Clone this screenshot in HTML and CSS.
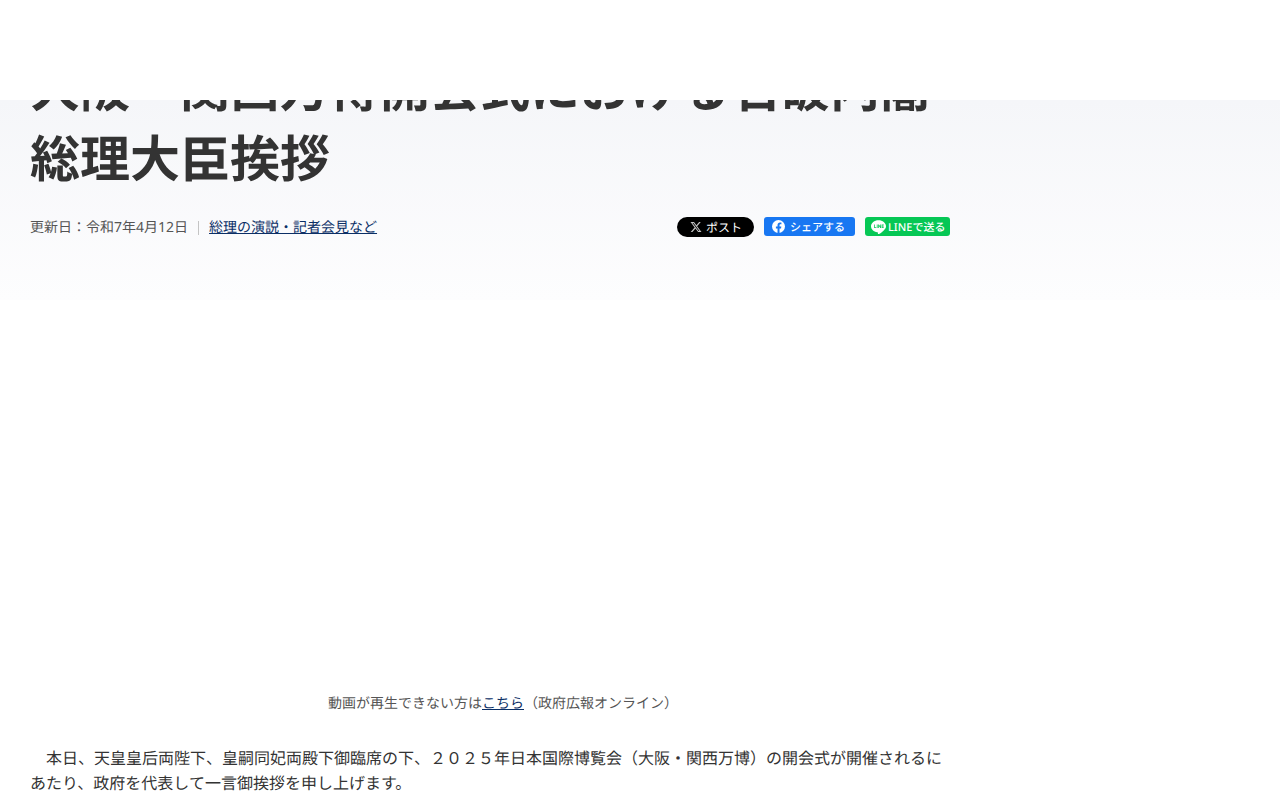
FILE: index.html
```html
<!DOCTYPE html>
<html lang="ja">
<head>
  <meta charset="UTF-8">
  <meta name="viewport" content="width=device-width, initial-scale=1.0">
  <title>大阪・関西万博開会式における石破内閣総理大臣挨拶</title>
  <link rel="stylesheet" href="styles.css">
</head>
<body>
  <header class="site-header"></header>
  <section class="hero">
    <h1>大阪・関西万博開会式における石破内閣総理大臣挨拶</h1>
    <div class="meta">
      <p class="meta-info">
        <span class="date">更新日：令和7年4月12日</span>
        <span class="sep"></span>
        <a href="#">総理の演説・記者会見など</a>
      </p>
      <div class="share">
        <a class="btn-x" href="#">
          <svg width="12" height="12" viewBox="0 0 24 24"><path fill="#c4c4c4" d="M18.200 2h3.400l-7.400 8.500L23 22h-6.800l-5.300-7-6.100 7H1.400l7.900-9.100L1 2h7l4.800 6.400L18.200 2zm-1.200 18h1.900L7 3.900H5L17 20z"/></svg>
          <span>ポスト</span>
        </a>
        <a class="btn-fb" href="#">
          <svg width="13" height="13" viewBox="0 0 24 24"><circle cx="12" cy="12" r="12" fill="#fff"/><path fill="#1877f2" d="M16.700 15.500l.5-3.500h-3.300V9.800c0-1 .5-1.900 2-1.900h1.500v-3s-1.400-.2-2.700-.2c-2.700 0-4.500 1.700-4.500 4.600V12h-3v3.500h3V24h3.700v-8.500z"/></svg>
          <span>シェアする</span>
        </a>
        <a class="btn-line" href="#">
          <svg width="15" height="14" viewBox="0 0 24 22"><path fill="#fff" d="M12 0C5.400 0 0 4.300 0 9.700c0 4.800 4.300 8.800 10 9.600.4.100.9.300 1.100.6.100.3.100.8 0 1.100l-.1 1c-.1.300-.2 1.100 1 .6s6.500-3.800 8.800-6.500C22.500 14.300 24 12.200 24 9.700 24 4.300 18.600 0 12 0z"/><path fill="#06c755" d="M5 7h1.200v4.300h2.200v1.100H5zM9.300 7h1.200v5.400H9.300zM11.500 7h1.100l2.200 3.200V7H16v5.400h-1.100l-2.200-3.200v3.200h-1.200zM17 7h3.400v1.100h-2.200v1h2.200v1.100h-2.200v1.100h2.200v1.100H17z"/></svg>
          <span>LINEで送る</span>
        </a>
      </div>
    </div>
  </section>
  <main class="content">
    <div class="video"></div>
    <p class="caption">動画が再生できない方は<a href="#">こちら</a>（政府広報オンライン）</p>
    <p class="speech">　本日、天皇皇后両陛下、皇嗣同妃両殿下御臨席の下、２０２５年日本国際博覧会（大阪・関西万博）の開会式が開催されるにあたり、政府を代表して一言御挨拶を申し上げます。</p>
  </main>
</body>
</html>
```

FILE: styles.css
```css
html, body {
  height: 800px;
  overflow: hidden;
}
body {
  margin: 0;
  font-family: "Noto Sans", "Noto Sans CJK JP", sans-serif;
  color: #333;
  background-color: #fff;
  text-rendering: geometricPrecision;
}
a {
  color: #0b2f66;
}
.site-header {
  position: absolute;
  top: 0;
  left: 0;
  width: 100%;
  height: 100px;
  background-color: #fff;
  z-index: 2;
}
.hero {
  height: 300px;
  padding: 53px 330px 0 30px;
  box-sizing: border-box;
  background: linear-gradient(180deg, #f5f6f9 100px, #fdfdfe 100%);
}
h1 {
  margin: 0;
  font-size: 50px;
  line-height: 70px;
  font-weight: 700;
}
.meta {
  display: flex;
  justify-content: space-between;
  align-items: flex-start;
  margin-top: 24px;
}
.meta-info {
  display: flex;
  align-items: center;
  margin: 1px 0 0;
  font-size: 14px;
  line-height: 20px;
  color: #555;
}
.sep {
  width: 1px;
  height: 14px;
  margin: 0 10px;
  background-color: #c4c4c4;
}
.share {
  display: flex;
  align-items: flex-start;
  gap: 10px;
}
.share a {
  display: flex;
  align-items: center;
  color: #fff;
  text-decoration: none;
  white-space: nowrap;
}
.btn-x {
  width: 77px;
  height: 20px;
  box-sizing: border-box;
  padding-left: 13px;
  gap: 4px;
  background-color: #000;
  border-radius: 10px;
  font-size: 12px;
}
.btn-fb {
  width: 91px;
  height: 19px;
  box-sizing: border-box;
  padding-left: 8px;
  gap: 5px;
  background-color: #1877f2;
  border-radius: 3px;
  font-size: 11px;
  font-weight: 500;
}
.btn-line {
  width: 85px;
  height: 19px;
  box-sizing: border-box;
  padding-left: 6px;
  gap: 2px;
  background-color: #06c755;
  border-radius: 3px;
  font-size: 11px;
  font-weight: 500;
}
.content {
  width: 920px;
  margin-left: 30px;
}
.video {
  height: 394px;
}
.caption {
  margin: 0;
  padding-left: 26px;
  text-align: center;
  font-size: 14px;
  line-height: 20px;
  color: #555;
}
.speech {
  margin: 32px 0 0;
  font-size: 16px;
  line-height: 25px;
  color: #333;
}
```
